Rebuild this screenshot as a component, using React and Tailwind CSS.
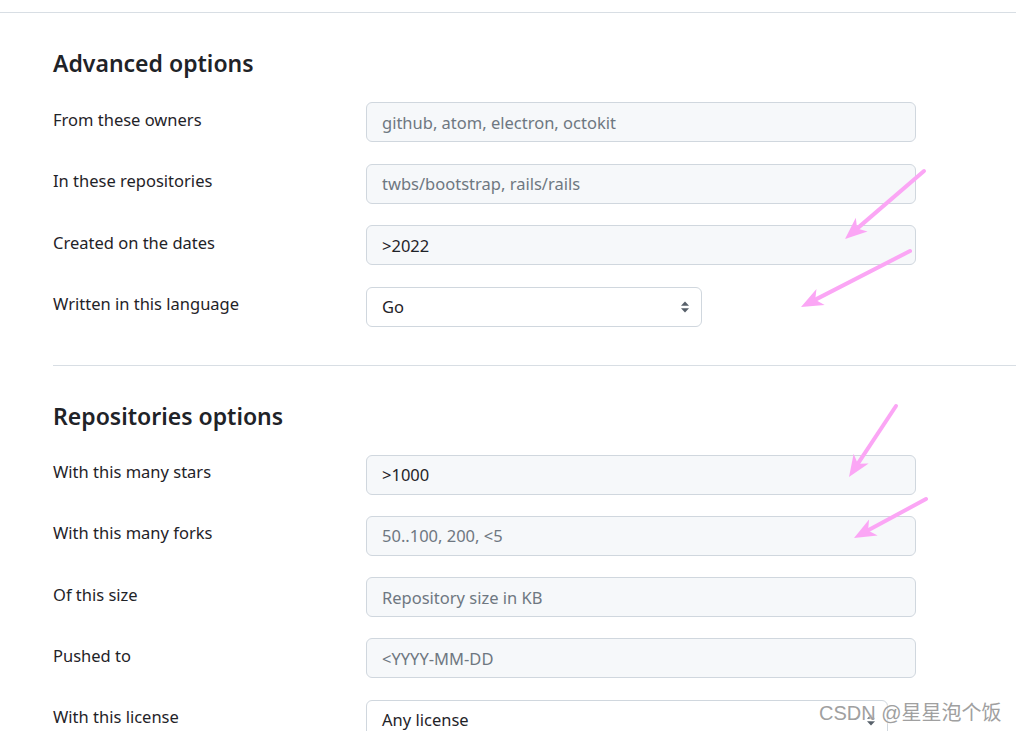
import React from "react";

const font = { fontFamily: '"Noto Sans", "Open Sans", Arial, sans-serif' };

const advanced = [
  { label: "From these owners", placeholder: "github, atom, electron, octokit" },
  { label: "In these repositories", placeholder: "twbs/bootstrap, rails/rails" },
  { label: "Created on the dates", value: ">2022" },
  { label: "Written in this language", select: "Go", width: "w-[336px]" },
];

const repos = [
  { label: "With this many stars", value: ">1000" },
  { label: "With this many forks", placeholder: "50..100, 200, <5" },
  { label: "Of this size", placeholder: "Repository size in KB" },
  { label: "Pushed to", placeholder: "<YYYY-MM-DD" },
  { label: "With this license", select: "Any license", width: "w-[522px]" },
];

const SelectArrows = () => (
  <svg width="10" height="12" viewBox="0 0 10 12" className="shrink-0">
    <path d="M5 0.5 L9 4.8 H1 Z" fill="#57606a" />
    <path d="M5 11.5 L9 7.2 H1 Z" fill="#57606a" />
  </svg>
);

const Field = ({ row }) => {
  if (row.select) {
    return (
      <div
        className={`${row.width} h-10 rounded-md border border-[#d0d7de] bg-white flex items-center justify-between pl-[15px] pr-[11px] text-[16.5px] text-[#1f2328]`}
      >
        <span className="pt-[2px]">{row.select}</span>
        <SelectArrows />
      </div>
    );
  }
  return (
    <div className="w-[550px] h-10 rounded-md border border-[#d0d7de] bg-[#f6f8fa] flex items-center pl-[15px] pt-[2px] text-[16.5px]">
      {row.value ? (
        <span className="text-[#1f2328]">{row.value}</span>
      ) : (
        <span className="text-[#6e7781]">{row.placeholder}</span>
      )}
    </div>
  );
};

const Section = ({ title, rows, gap }) => (
  <div>
    <h2 className="text-[23px] leading-[30px] font-semibold text-[#1f2328]">{title}</h2>
    <div className={`mt-6 flex flex-col ${gap}`}>
      {rows.map((row) => (
        <div key={row.label} className="flex items-center">
          <div className="w-[313px] text-[16.5px] text-[#1f2328] -mt-[4px]">{row.label}</div>
          <Field row={row} />
        </div>
      ))}
    </div>
  </div>
);

const Arrow = ({ x1, y1, x2, y2 }) => {
  const dx = x2 - x1;
  const dy = y2 - y1;
  const len = Math.hypot(dx, dy);
  const ux = dx / len;
  const uy = dy / len;
  const px = -uy;
  const py = ux;
  const back = 22;
  const wide = 9;
  const bx = x2 - ux * back;
  const by = y2 - uy * back;
  const ix = x2 - ux * (back - 6);
  const iy = y2 - uy * (back - 6);
  const head = `${x2},${y2} ${bx + px * wide},${by + py * wide} ${ix},${iy} ${bx - px * wide},${by - py * wide}`;
  return (
    <g>
      <line
        x1={x1}
        y1={y1}
        x2={x2 - ux * 14}
        y2={y2 - uy * 14}
        stroke="#fba6f5"
        strokeWidth="4"
        strokeLinecap="round"
      />
      <polygon points={head} fill="#fba6f5" />
    </g>
  );
};

export default function App() {
  return (
    <div className="relative w-[1016px] h-[731px] overflow-hidden bg-white" style={font}>
      <div className="h-[13px] border-b border-[#d8dee4]" />
      <div className="pl-[53px] pt-[35px]">
        <Section title="Advanced options" rows={advanced} gap="gap-[21.5px]" />
        <div className="mt-[38px] border-t border-[#d8dee4]" />
        <div className="pt-[35px]">
          <Section title="Repositories options" rows={repos} gap="gap-[21.25px]" />
        </div>
      </div>

      <svg className="absolute inset-0 pointer-events-none" width="1016" height="731">
        <Arrow x1={924} y1={171} x2={845} y2={239} />
        <Arrow x1={910} y1={251} x2={801} y2={307} />
        <Arrow x1={896} y1={406} x2={849} y2={477} />
        <Arrow x1={926} y1={499} x2={854} y2={538} />
      </svg>

      <div
        className="absolute left-[819px] top-[698px] text-[20px] text-[#a0a0a0] [text-shadow:0_0_2px_#ffffff,0_0_2px_#ffffff]"
        style={{ fontFamily: '"Liberation Sans", "Noto Sans CJK SC", sans-serif' }}
      >
        CSDN @星星泡个饭
      </div>
    </div>
  );
}
